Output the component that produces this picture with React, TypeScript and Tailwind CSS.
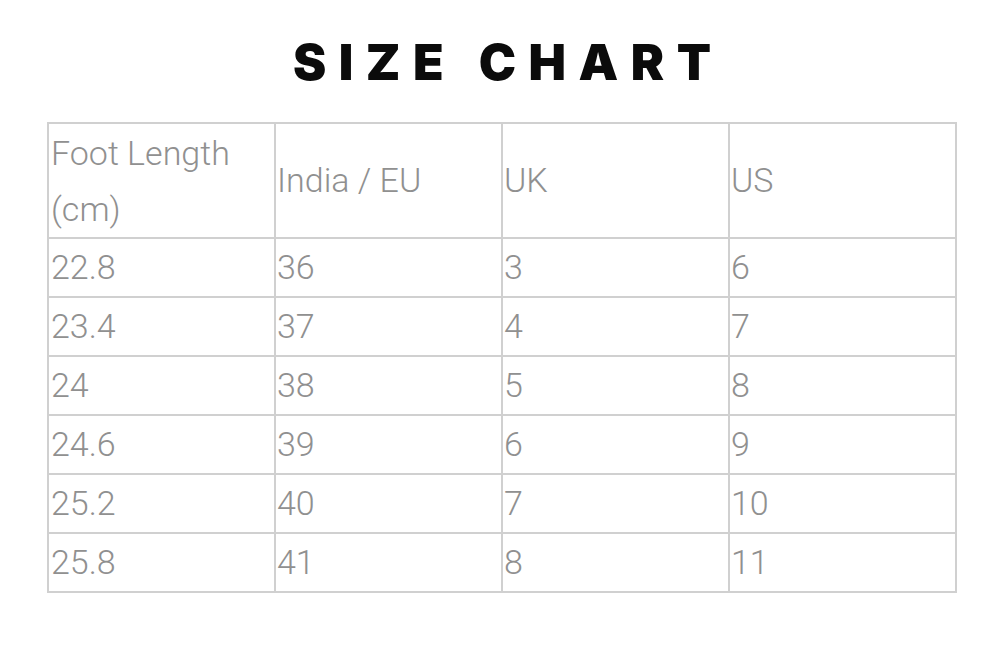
const rows = [
  ["22.8", "36", "3", "6"],
  ["23.4", "37", "4", "7"],
  ["24", "38", "5", "8"],
  ["24.6", "39", "6", "9"],
  ["25.2", "40", "7", "10"],
  ["25.8", "41", "8", "11"],
];

export default function App() {
  return (
    <div className="w-[1004px] h-[660px] bg-white pt-[30px]">
      <h1 className="text-center font-['Inter',sans-serif] font-black text-[50px] leading-[64px] tracking-[0.25em] pl-[0.25em] text-[#0b0b0b]">
        SIZE CHART
      </h1>
      <table className="ml-[47px] mt-[28px] border-collapse font-['Roboto',Arial,sans-serif] font-light text-[34px] text-[#909090]">
        <tbody>
          <tr className="h-[115px]">
            <td className="w-[227px] border-2 border-[#d0d0d0] pl-[2px] align-middle leading-[56px]">
              Foot Length
              <br />
              (cm)
            </td>
            <td className="w-[227px] border-2 border-[#d0d0d0] pl-[1px] align-middle">India / EU</td>
            <td className="w-[227px] border-2 border-[#d0d0d0] pl-[1px] align-middle">UK</td>
            <td className="w-[227px] border-2 border-[#d0d0d0] pl-[1px] align-middle">US</td>
          </tr>
          {rows.map((r) => (
            <tr key={r[0]} className="h-[59px]">
              {r.map((c, i) => (
                <td key={i} className={`border-2 border-[#d0d0d0] align-middle ${i === 0 ? "pl-[2px]" : "pl-[1px]"}`}>
                  {c}
                </td>
              ))}
            </tr>
          ))}
        </tbody>
      </table>
    </div>
  );
}
